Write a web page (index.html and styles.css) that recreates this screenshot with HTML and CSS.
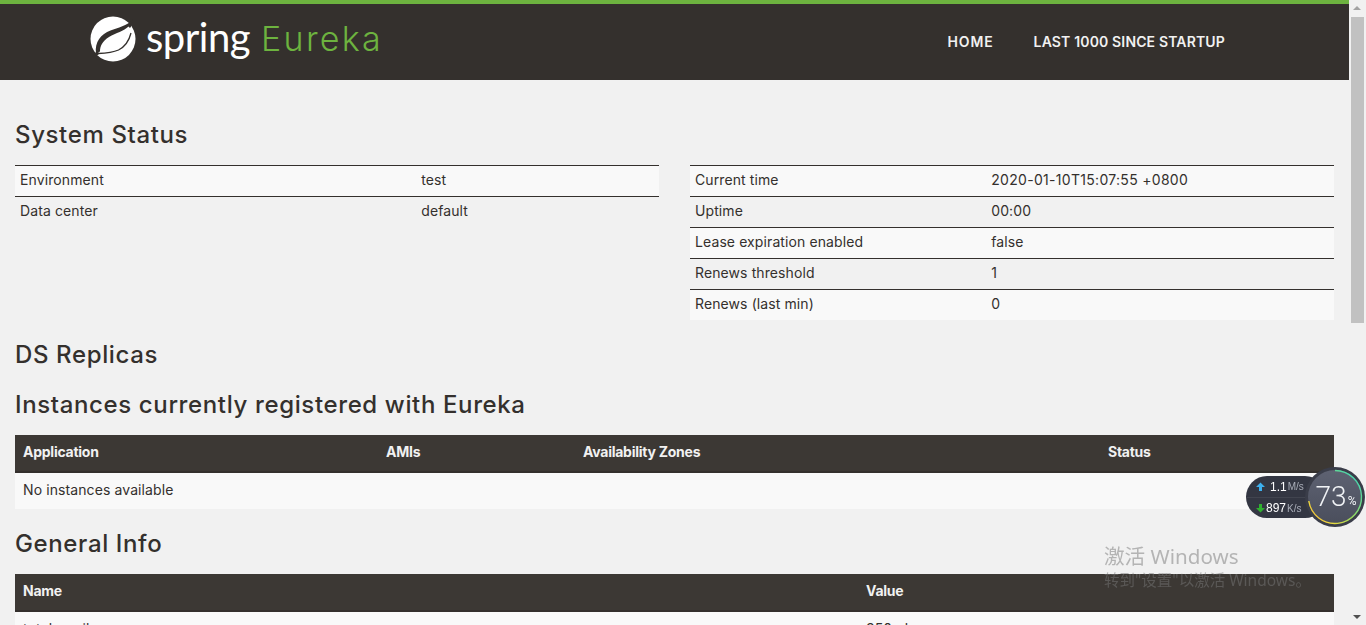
FILE: index.html
```html
<!DOCTYPE html>
<html lang="en">
<head>
<meta charset="utf-8">
<title>Eureka</title>
<link rel="stylesheet" href="styles.css">
</head>
<body>
<div class="viewport">
  <div class="page">
    <nav class="navbar">
      <div class="brand">
        <svg class="logo" width="46" height="46" viewBox="0 0 46 46">
          <circle cx="23" cy="23" r="22.500" fill="#fff"/>
          <path fill="#34302d" d="M43 3.500C37 9.500 28 12 20.500 14.500 11 18 4.500 26 6 37.500L10 35.500C10 30 12.500 25 19 21 26 17 34 15 38.500 10.500c2 3 2.500 1 4.500-7z"/>
          <path fill="none" stroke="#34302d" stroke-width="1.300" d="M8 37.500c8-.3 15-1 20.500-3.500 6-3 10.500-9 12.500-17"/>
          <circle cx="7" cy="37.500" r="1.800" fill="#34302d"/>
        </svg>
        <span class="brand-spring">spring</span>
        <span class="brand-eureka">Eureka</span>
      </div>
      <ul class="nav-links">
        <li class="nav-home">HOME</li>
        <li>LAST 1000 SINCE STARTUP</li>
      </ul>
    </nav>
    <main class="content">
      <h1 class="title">System Status</h1>
      <div class="columns">
        <table class="stripe stripe-left">
          <tr><td>Environment</td><td>test</td></tr>
          <tr class="plain"><td>Data center</td><td>default</td></tr>
        </table>
        <table class="stripe stripe-right">
          <tr><td>Current time</td><td class="time">2020-01-10T15:07:55 +0800</td></tr>
          <tr class="plain"><td>Uptime</td><td>00:00</td></tr>
          <tr><td>Lease expiration enabled</td><td>false</td></tr>
          <tr class="plain"><td>Renews threshold</td><td>1</td></tr>
          <tr class="last"><td>Renews (last min)</td><td>0</td></tr>
        </table>
      </div>
      <h1 class="title title-replicas">DS Replicas</h1>
      <h1 class="title title-instances">Instances currently registered with Eureka</h1>
      <table class="data data-instances">
        <thead><tr><th>Application</th><th>AMIs</th><th>Availability Zones</th><th>Status</th></tr></thead>
        <tbody><tr><td colspan="4">No instances available</td></tr></tbody>
      </table>
      <h1 class="title title-info">General Info</h1>
      <table class="data data-info">
        <thead><tr><th>Name</th><th>Value</th></tr></thead>
        <tbody><tr><td>total-avail-memory</td><td>350mb</td></tr></tbody>
      </table>
    </main>
  </div>
  <div class="scrollbar">
    <span class="arrow arrow-up"></span>
    <span class="thumb"></span>
    <span class="track"></span>
    <span class="arrow arrow-down"></span>
  </div>
</div>

<div class="speed">
  <div class="speed-pill">
    <div class="speed-row">
      <svg class="speed-arrow" width="9" height="9" viewBox="0 0 9 9"><path fill="#3db0ef" d="M4.500 .5L9 5H6v4H3V5H0z"/></svg>
      <b class="num-up">1.1</b><i>M/s</i>
    </div>
    <div class="speed-row">
      <svg class="speed-arrow" width="9" height="9" viewBox="0 0 9 9"><path fill="#2fb02f" d="M4.500 8.500L0 4h3V0h3v4h3z"/></svg>
      <b class="num-down">897</b><i>K/s</i>
    </div>
  </div>
  <div class="gauge">
    <svg width="60" height="60" viewBox="0 0 60 60">
      <defs>
        <linearGradient id="ring" x1="1" y1="0" x2="0" y2="1">
          <stop offset="0" stop-color="#2fd6c8"/>
          <stop offset=".55" stop-color="#9ad85a"/>
          <stop offset=".8" stop-color="#f0d83c"/>
          <stop offset="1" stop-color="#e89a3a"/>
        </linearGradient>
        <linearGradient id="face" x1="0" y1="0" x2="0" y2="1">
          <stop offset="0" stop-color="#5e6272"/>
          <stop offset="1" stop-color="#4a4e5c"/>
        </linearGradient>
      </defs>
      <circle cx="30" cy="30" r="30" fill="#3a3d49"/>
      <circle cx="30" cy="30" r="27" fill="url(#face)"/>
      <path fill="none" stroke="url(#ring)" stroke-width="1.400" d="M30 3.500A26.500 26.500 0 1 1 3.800 34"/>
    </svg>
    <span class="gauge-text">73<small>%</small></span>
  </div>
</div>

<div class="watermark">
  <div class="wm-title">激活 Windows</div>
  <div class="wm-sub">转到"设置"以激活 Windows。</div>
</div>
</body>
</html>
```
FILE: styles.css
```css
* { box-sizing: border-box; }
html, body { margin: 0; height: 100%; overflow: hidden; }
body {
  background: #f1f1f1;
  color: #34302d;
  font-family: "Inter", "Open Sans", sans-serif;
  font-size: 14px;
  letter-spacing: .1px;
}
.viewport { display: flex; height: 625px; width: 1366px; }
.page { width: 1349px; flex: none; height: 625px; overflow: hidden; }
.navbar {
  height: 80px;
  background: #34302d;
  border-top: 4px solid #6db33f;
  display: flex;
  justify-content: space-between;
  padding-left: 90px;
  padding-right: 124px;
}
.brand { display: flex; align-items: center; height: 69px; }
.logo { margin-right: 10px; flex: none; }
.brand-spring { color: #fff; font-size: 40px; letter-spacing: -.5px; font-family: "Lato", sans-serif; margin-right: 11px; line-height: 1; padding-bottom: 3px; }
.brand-eureka { color: #6db33f; font-size: 34px; font-weight: 300; letter-spacing: 2.300px; font-family: "Inter", sans-serif; line-height: 1; }
.nav-links { display: flex; gap: 40px; list-style: none; margin: 0; padding: 0; height: 75px; align-items: center; color: #f1f1f1; font-weight: 600; font-size: 14px; letter-spacing: .15px; }
.nav-home { letter-spacing: .9px; }
.content { padding: 0 15px; }
.title { font-size: 24px; font-weight: 500; line-height: 26px; margin: 42px 0 17px; color: #34302d; letter-spacing: .63px; }
.title-replicas { margin: 22px 0 0; }
.title-instances { margin: 24px 0 17px; }
.title-info { margin: 22px 0 17px; }
.columns { display: flex; justify-content: space-between; align-items: flex-start; }
table { border-collapse: collapse; border-spacing: 0; table-layout: fixed; }
.stripe { width: 644px; }
.stripe td { height: 31px; padding: 4px 5px 0; line-height: 20px; background: #f9f9f9; border-top: 1px solid #34302d; vertical-align: top; }
.stripe .plain td { background: transparent; }
.stripe .last td { height: 30px; }
.stripe-left td:first-child { width: 62.300%; }
.stripe-right td:first-child { width: 46%; }
.stripe .time { letter-spacing: .3px; }
.data { width: 100%; }
.data th {
  background: #3c3834;
  color: #f1f1f1;
  text-align: left;
  font-weight: 700;
  height: 37px;
  padding: 0 8px 2px;
  border-bottom: 2px solid #34302d;
  letter-spacing: -.25px;
}
.data td { height: 37px; padding: 7px 8px 0; line-height: 20px; vertical-align: top; background: #f9f9f9; }
.data-instances th:nth-child(1) { width: 363px; }
.data-instances th:nth-child(2) { width: 197px; }
.data-instances th:nth-child(3) { width: 525px; }
.data-info th:first-child { width: 843px; }
.scrollbar { width: 17px; flex: none; display: flex; flex-direction: column; background: #f1f1f1; }
.arrow { height: 17px; flex: none; display: block; position: relative; }
.arrow-up::after, .arrow-down::after {
  content: ""; position: absolute; left: 4px; border-left: 4px solid transparent; border-right: 4px solid transparent;
}
.arrow-up::after { top: 6px; border-bottom: 4px solid #a3a3a3; }
.arrow-down::after { top: 7px; border-top: 4px solid #505050; }
.thumb { height: 306px; margin: 0 2px; background: #c1c1c1; flex: none; }
.track { flex: 1; }
.speed { position: fixed; left: 1246px; top: 467px; width: 120px; height: 60px; }
.speed-pill {
  position: absolute; left: 0; top: 9px; width: 80px; height: 42px; border-radius: 21px;
  background: #333642; display: flex; flex-direction: column; color: #fff; font-family: "Liberation Sans", sans-serif;
  letter-spacing: 0;
}
.speed-row { height: 21px; display: flex; align-items: center; padding-left: 10px; white-space: nowrap; }
.speed-row + .speed-row { border-top: 1px solid #41444f; }
.speed-arrow { flex: none; }
.speed-row b { font-weight: 400; font-size: 12px; margin-right: 1px; }
.num-up { margin-left: 5px; }
.num-down { margin-left: 1px; }
.speed-row i { font-style: normal; font-size: 10px; color: #a9adb8; }
.gauge { position: absolute; left: 59px; top: 0; width: 60px; height: 60px; }
.gauge svg { display: block; }
.gauge-text {
  position: absolute; left: 0; top: 0; width: 100%; height: 100%; display: flex; align-items: center; justify-content: center;
  padding-bottom: 2px; padding-left: 2px;
  color: #f1f3f6; font-family: "Roboto", sans-serif; font-size: 28px; font-weight: 300; letter-spacing: 0;
}
.gauge-text small { font-size: 12px; margin-top: 9px; margin-left: 1px; font-weight: 400; }
.watermark { position: fixed; left: 1104px; top: 544px; color: rgba(120, 120, 120, .5); font-family: "Noto Sans", "Noto Sans CJK SC", sans-serif; pointer-events: none; white-space: nowrap; letter-spacing: 0; }
.wm-title { font-size: 20.600px; line-height: 24px; }
.wm-sub { font-size: 15.500px; line-height: 24px; }
```
